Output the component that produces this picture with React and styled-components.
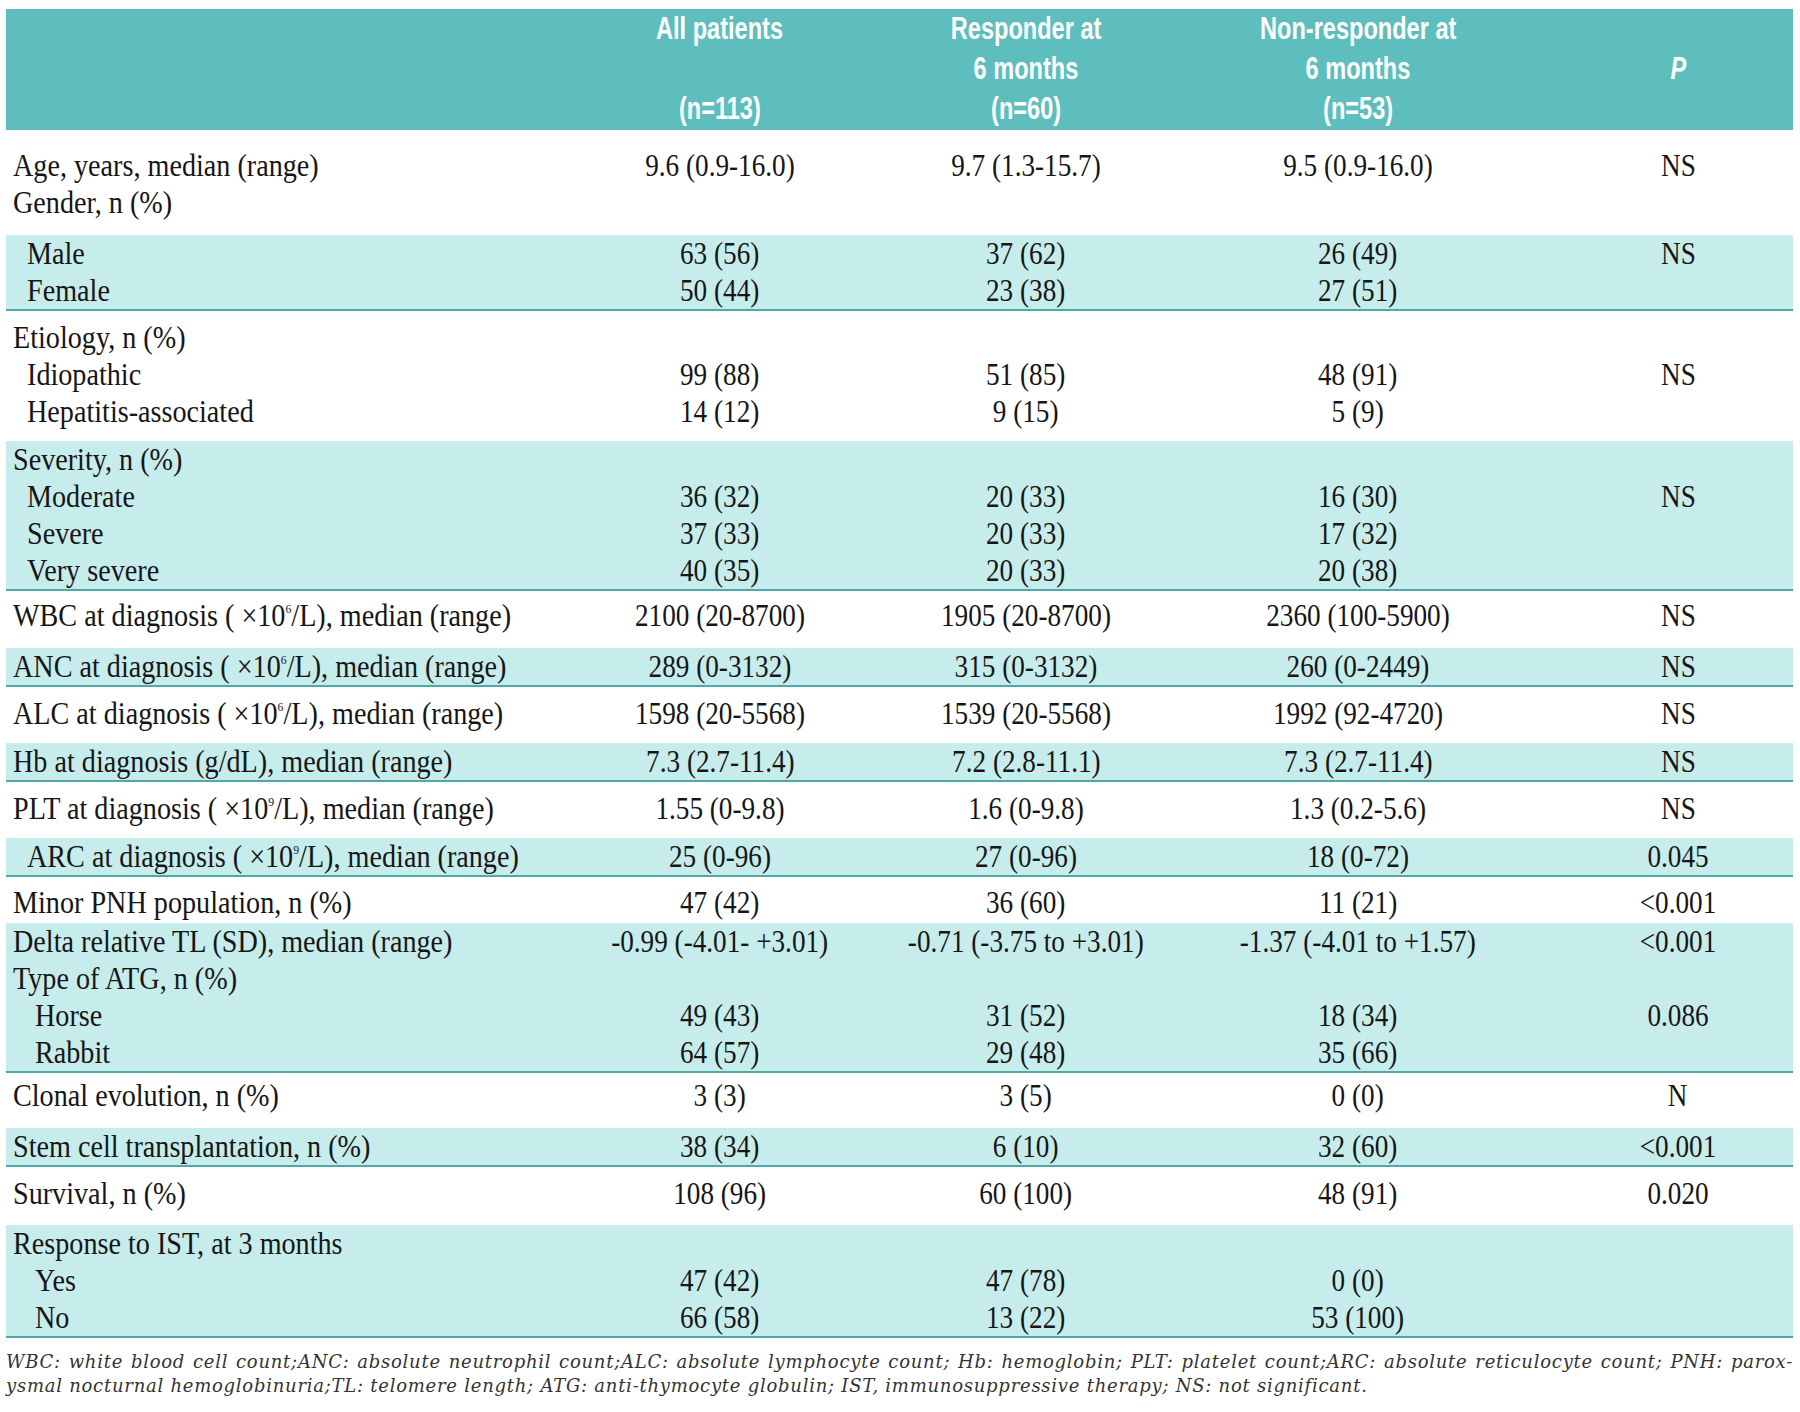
import React from "react";
import styled, { createGlobalStyle } from "styled-components";

const HEAD_BG = "#5ebebe";
const BAND_BG = "#c7ecec";
const RULE = "#4fa9a9";
const COLS = "535px 358px 254px 410px 230px";

const GlobalStyle = createGlobalStyle`
  body {
    margin: 0;
    background: #ffffff;
  }
`;

const Page = styled.div`
  width: 1800px;
  box-sizing: border-box;
  padding: 9px 7px 20px 6px;
  font-family: "Liberation Serif", "Times New Roman", serif;
  color: #161616;
`;

const Head = styled.div`
  display: grid;
  grid-template-columns: ${COLS};
  height: 121px;
  background: ${HEAD_BG};
`;

const HeadCell = styled.div`
  display: flex;
  flex-direction: column;
  align-items: center;
`;

const HeadLine = styled.div`
  height: 40px;
  line-height: 40px;
  font-family: "Liberation Sans", Arial, sans-serif;
  font-weight: 700;
  font-size: 31px;
  font-style: ${(p) => (p.$italic ? "italic" : "normal")};
  color: #ffffff;
  white-space: nowrap;
  transform: scaleX(0.76);
`;

const Band = styled.div`
  background: ${(p) => (p.$shaded ? BAND_BG : "transparent")};
  border-bottom: ${(p) => (p.$shaded ? `2px solid ${RULE}` : "none")};
  padding: ${(p) => p.$top}px 0 ${(p) => p.$bottom}px;
`;

const Line = styled.div`
  display: grid;
  grid-template-columns: ${COLS};
  height: 37px;
  line-height: 37px;
  font-size: 32px;
`;

const Label = styled.div`
  padding-left: ${(p) => p.$indent}px;
  white-space: nowrap;
`;

const Value = styled.div`
  display: flex;
  justify-content: center;
  white-space: nowrap;
`;

const Squeeze = styled.span`
  display: inline-block;
  transform: scaleX(${(p) => p.$scale || 0.85});
  transform-origin: ${(p) => p.$from || "center"};
`;

const Sup = styled.sup`
  font-size: 0.42em;
  line-height: 0;
  vertical-align: 0.95em;
`;

const Note = styled.div`
  padding-top: 12px;
  font-family: "DejaVu Serif", "Liberation Serif", serif;
  font-style: italic;
  font-size: 18px;
  line-height: 24px;
  letter-spacing: 0.75px;
  color: #333333;
`;

const NoteLine = styled.div`
  white-space: nowrap;
  text-align: ${(p) => (p.$justify ? "justify" : "left")};
  text-align-last: ${(p) => (p.$justify ? "justify" : "auto")};
`;

const unit = (n) => (
  <>
    ( ×10<Sup>{n}</Sup>/L)
  </>
);

const header = [
  { lines: ["", "", ""] },
  { lines: ["All patients", "", "(n=113)"] },
  { lines: ["Responder at", "6 months", "(n=60)"] },
  { lines: ["Non-responder at", "6 months", "(n=53)"] },
  { lines: ["", "P", ""], italic: true },
];

const bands = [
  {
    top: 17,
    bottom: 14,
    lines: [
      { label: "Age, years, median (range)", v: ["9.6 (0.9-16.0)", "9.7 (1.3-15.7)", "9.5 (0.9-16.0)", "NS"] },
      { label: "Gender, n (%)" },
    ],
  },
  {
    shaded: true,
    lines: [
      { label: "Male", indent: 14, v: ["63 (56)", "37 (62)", "26 (49)", "NS"] },
      { label: "Female", indent: 14, v: ["50 (44)", "23 (38)", "27 (51)", ""] },
    ],
  },
  {
    top: 8,
    bottom: 11,
    lines: [
      { label: "Etiology, n (%)" },
      { label: "Idiopathic", indent: 14, v: ["99 (88)", "51 (85)", "48 (91)", "NS"] },
      { label: "Hepatitis-associated", indent: 14, v: ["14 (12)", "9 (15)", "5 (9)", ""] },
    ],
  },
  {
    shaded: true,
    lines: [
      { label: "Severity, n (%)" },
      { label: "Moderate", indent: 14, v: ["36 (32)", "20 (33)", "16 (30)", "NS"] },
      { label: "Severe", indent: 14, v: ["37 (33)", "20 (33)", "17 (32)", ""] },
      { label: "Very severe", indent: 14, v: ["40 (35)", "20 (33)", "20 (38)", ""] },
    ],
  },
  {
    top: 6,
    bottom: 14,
    lines: [
      {
        label: <>WBC at diagnosis {unit(6)}, median (range)</>,
        v: ["2100 (20-8700)", "1905 (20-8700)", "2360 (100-5900)", "NS"],
      },
    ],
  },
  {
    shaded: true,
    lines: [
      {
        label: <>ANC at diagnosis {unit(6)}, median (range)</>,
        v: ["289 (0-3132)", "315 (0-3132)", "260 (0-2449)", "NS"],
      },
    ],
  },
  {
    top: 8,
    bottom: 11,
    lines: [
      {
        label: <>ALC at diagnosis {unit(6)}, median (range)</>,
        v: ["1598 (20-5568)", "1539 (20-5568)", "1992 (92-4720)", "NS"],
      },
    ],
  },
  {
    shaded: true,
    lines: [
      {
        label: "Hb at diagnosis (g/dL), median (range)",
        v: ["7.3 (2.7-11.4)", "7.2 (2.8-11.1)", "7.3 (2.7-11.4)", "NS"],
      },
    ],
  },
  {
    top: 8,
    bottom: 11,
    lines: [
      {
        label: <>PLT at diagnosis {unit(9)}, median (range)</>,
        v: ["1.55 (0-9.8)", "1.6 (0-9.8)", "1.3 (0.2-5.6)", "NS"],
      },
    ],
  },
  {
    shaded: true,
    lines: [
      {
        label: <>ARC at diagnosis {unit(9)}, median (range)</>,
        indent: 14,
        v: ["25 (0-96)", "27 (0-96)", "18 (0-72)", "0.045"],
      },
    ],
  },
  {
    top: 7,
    bottom: 2,
    lines: [
      { label: "Minor PNH population, n (%)", v: ["47 (42)", "36 (60)", "11 (21)", "<0.001"] },
    ],
  },
  {
    shaded: true,
    lines: [
      {
        label: "Delta relative TL (SD), median (range)",
        v: ["-0.99 (-4.01- +3.01)", "-0.71 (-3.75 to +3.01)", "-1.37 (-4.01 to +1.57)", "<0.001"],
      },
      { label: "Type of ATG, n (%)" },
      { label: "Horse", indent: 22, v: ["49 (43)", "31 (52)", "18 (34)", "0.086"] },
      { label: "Rabbit", indent: 22, v: ["64 (57)", "29 (48)", "35 (66)", ""] },
    ],
  },
  {
    top: 4,
    bottom: 14,
    lines: [{ label: "Clonal evolution, n (%)", v: ["3 (3)", "3 (5)", "0 (0)", "N"] }],
  },
  {
    shaded: true,
    lines: [
      { label: "Stem cell transplantation, n (%)", v: ["38 (34)", "6 (10)", "32 (60)", "<0.001"] },
    ],
  },
  {
    top: 8,
    bottom: 13,
    lines: [{ label: "Survival, n (%)", v: ["108 (96)", "60 (100)", "48 (91)", "0.020"] }],
  },
  {
    shaded: true,
    lines: [
      { label: "Response to IST, at 3 months" },
      { label: "Yes", indent: 22, v: ["47 (42)", "47 (78)", "0 (0)", ""] },
      { label: "No", indent: 22, v: ["66 (58)", "13 (22)", "53 (100)", ""] },
    ],
  },
];

export default function App() {
  return (
    <Page>
      <GlobalStyle />
      <Head>
        {header.map((col, i) => (
          <HeadCell key={i}>
            {col.lines.map((text, j) => (
              <HeadLine key={j} $italic={col.italic}>
                {text}
              </HeadLine>
            ))}
          </HeadCell>
        ))}
      </Head>
      {bands.map((band, i) => (
        <Band
          key={i}
          $shaded={band.shaded}
          $top={band.top || 0}
          $bottom={band.bottom || 0}
        >
          {band.lines.map((line, j) => (
            <Line key={j}>
              <Label $indent={7 + (line.indent || 0)}>
                <Squeeze $from="left" $scale={0.88}>
                  {line.label}
                </Squeeze>
              </Label>
              {(line.v || ["", "", "", ""]).map((value, k) => (
                <Value key={k}>
                  <Squeeze>{value}</Squeeze>
                </Value>
              ))}
            </Line>
          ))}
        </Band>
      ))}
      <Note>
        <NoteLine $justify>
          WBC: white blood cell count;ANC: absolute neutrophil count;ALC: absolute lymphocyte count; Hb:
          hemoglobin; PLT: platelet count;ARC: absolute reticulocyte count; PNH: parox-
        </NoteLine>
        <NoteLine>
          ysmal nocturnal hemoglobinuria;TL: telomere length; ATG: anti-thymocyte globulin; IST,
          immunosuppressive therapy; NS: not significant.
        </NoteLine>
      </Note>
    </Page>
  );
}
